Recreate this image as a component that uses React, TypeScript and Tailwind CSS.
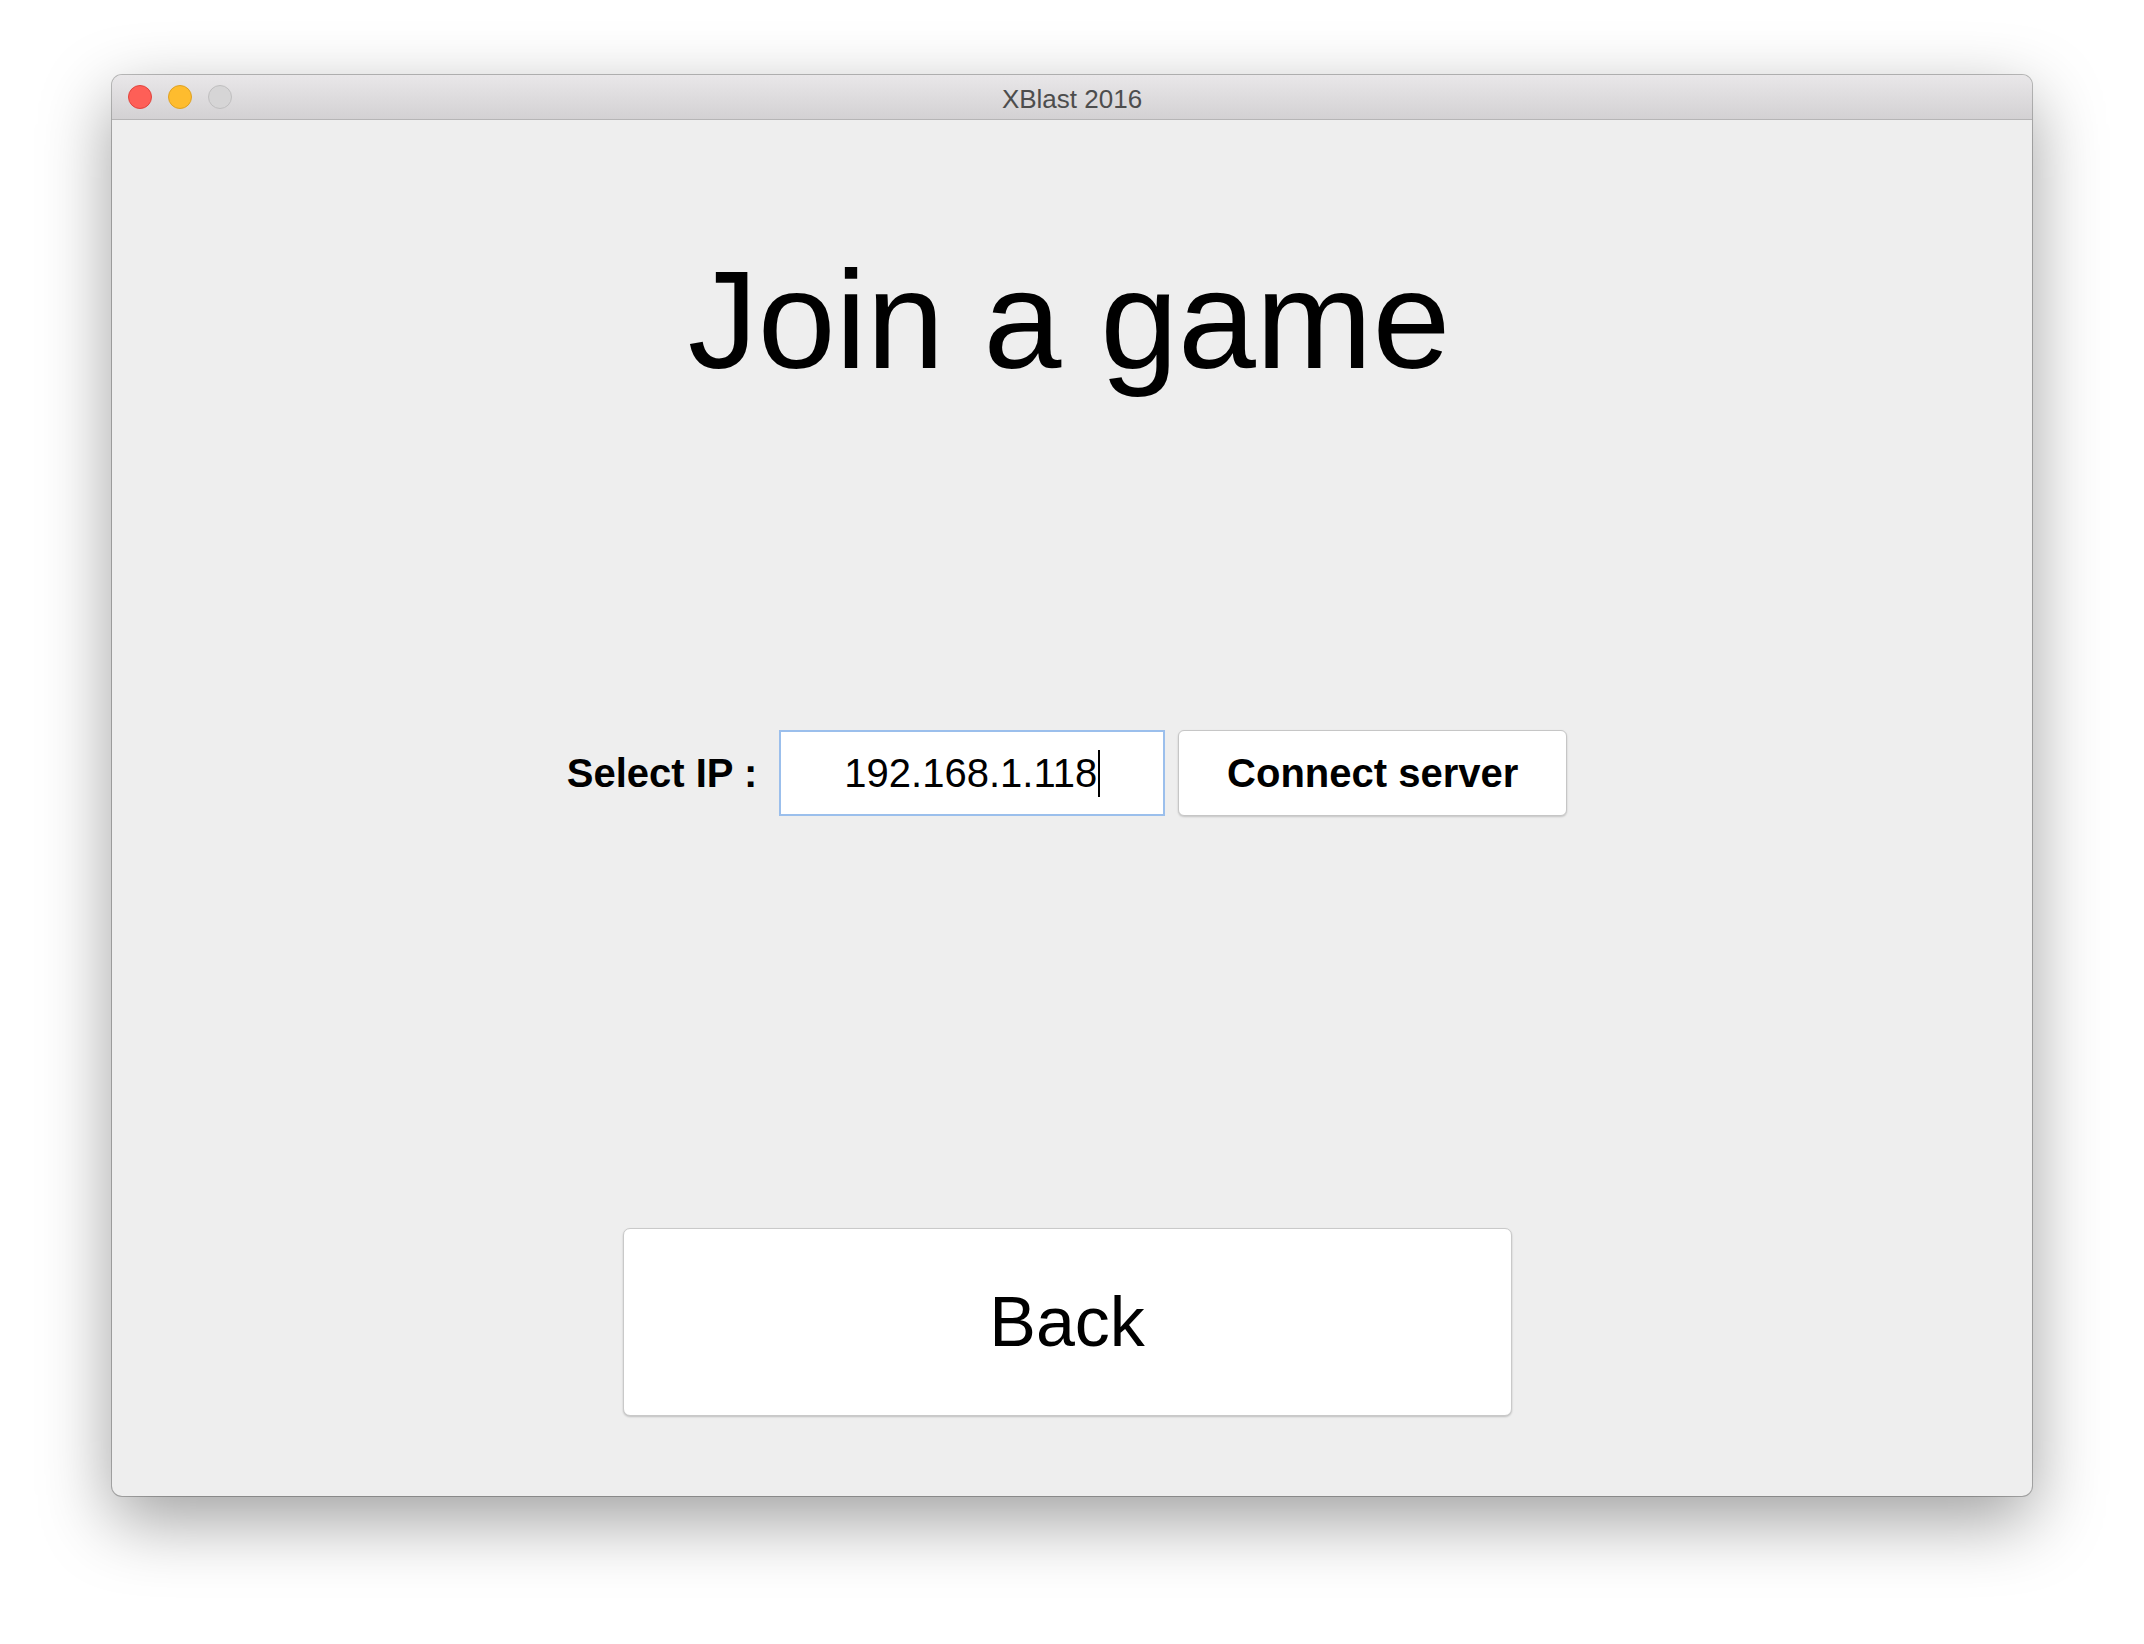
import React from 'react';

const font = { fontFamily: '"Liberation Sans", Arial, Helvetica, sans-serif' };

const TrafficLights = () => (
  <div className="flex items-center gap-[16px] pl-[16px]">
    <div className="w-[24px] h-[24px] rounded-full bg-[#fe5f57] border border-[#e0443e]"></div>
    <div className="w-[24px] h-[24px] rounded-full bg-[#febc2e] border border-[#dea123]"></div>
    <div className="w-[24px] h-[24px] rounded-full bg-[#d6d5d6] border border-[#bfbebf]"></div>
  </div>
);

export default function App() {
  return (
    <div className="min-h-[1644px] w-full bg-white" style={font}>
      <div className="pl-[112px] pt-[75px]">
        <div className="w-[1920px] h-[1421px] rounded-[10px] bg-[#eeeeee] ring-1 ring-black/25 shadow-[0_24px_70px_rgba(0,0,0,0.38)] overflow-hidden flex flex-col">
          {/* Title bar */}
          <div className="relative h-[45px] shrink-0 flex items-center bg-gradient-to-b from-[#e9e7e9] to-[#d3d1d3] border-b border-[#b6b5b6]">
            <TrafficLights />
            <div className="absolute inset-0 pt-[4px] flex items-center justify-center text-[26px] text-[#4d4d4d] pointer-events-none">
              XBlast 2016
            </div>
          </div>

          {/* Content */}
          <div className="flex-1 flex flex-col items-center pr-[10px] pt-[120px]">
            <h1 className="text-[140px] leading-[160px] h-[160px] text-black font-normal pl-[4px]">Join a game</h1>

            <div className="mt-[330px] flex items-center h-[86px]">
              <span className="text-[40px] font-bold text-black leading-none">Select IP :</span>
              <div className="ml-[22px] w-[386px] h-[86px] bg-white border-2 border-[#9bbfec] flex items-center justify-center">
                <span className="text-[40px] text-black leading-none">192.168.1.118</span>
                <span className="w-[2px] h-[47px] bg-black ml-[1px]"></span>
              </div>
              <button className="ml-[13px] w-[389px] h-[86px] bg-white border border-[#c6c6c6] rounded-[6px] shadow-[0_1px_2px_rgba(0,0,0,0.18)] text-[40px] font-bold text-black leading-none">
                Connect server
              </button>
            </div>

            <button className="mt-[412px] w-[889px] h-[188px] bg-white border border-[#c9c9c9] rounded-[7px] shadow-[0_1px_2px_rgba(0,0,0,0.2)] text-[70px] text-black leading-none">
              Back
            </button>
          </div>
        </div>
      </div>
    </div>
  );
}
